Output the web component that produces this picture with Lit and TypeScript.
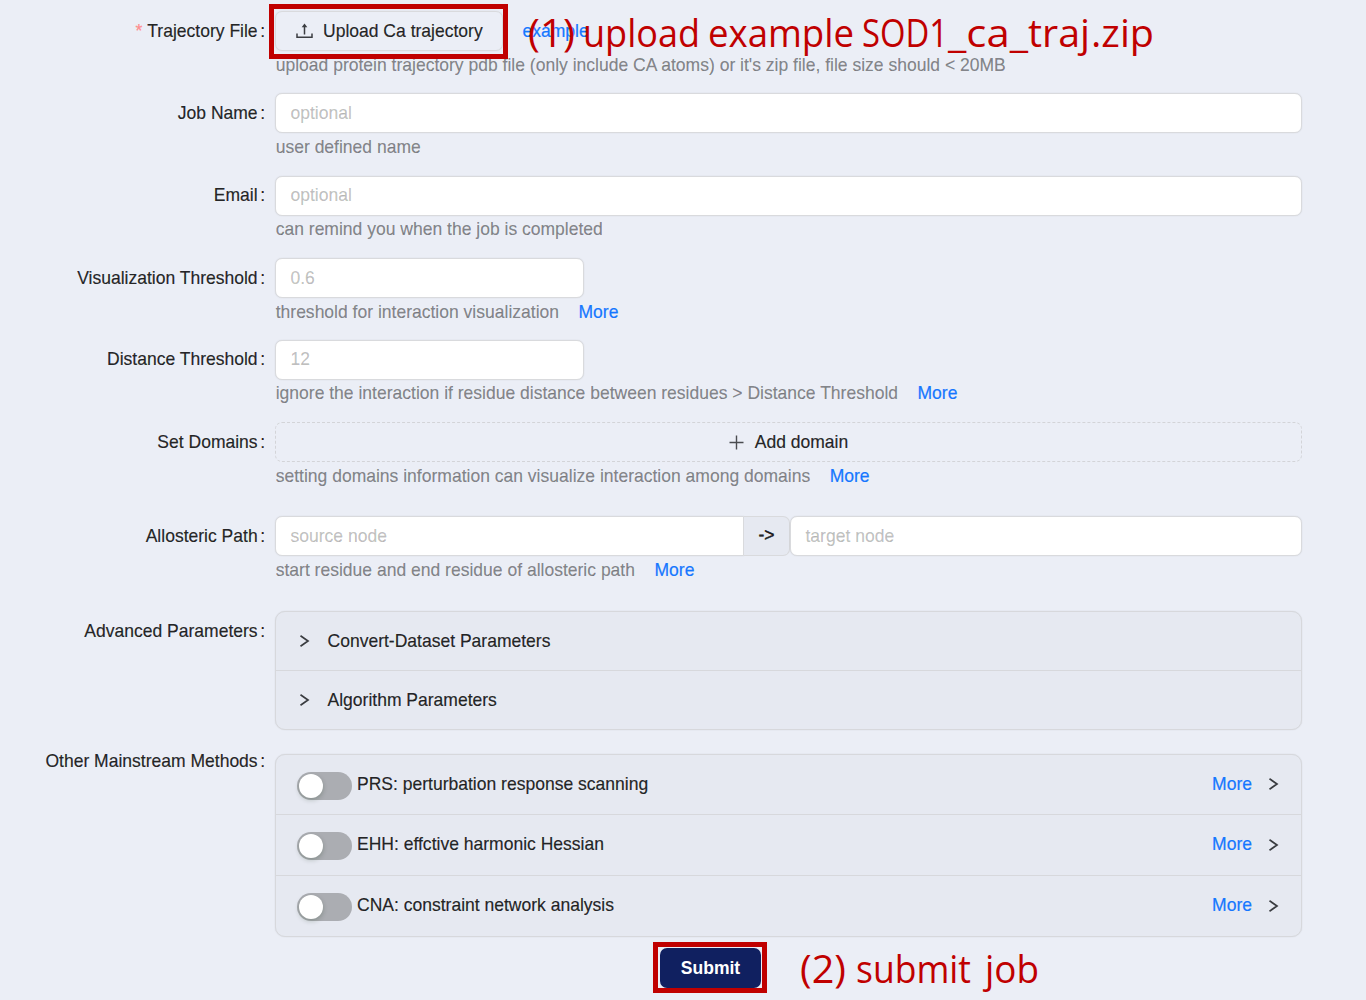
import { LitElement, html, css, svg, nothing } from "lit";
import { customElement } from "lit/decorators.js";

const chevron = html`<svg class="chev" viewBox="0 0 12 14" width="12" height="14"><path d="M1.5 1.8 9 7 1.5 12.2" fill="none" stroke="#3a3c40" stroke-width="1.7"/></svg>`;
type Word = [string, number, number];
const note = (words: Word[]) =>
  svg`<text y="37">${words.map(([t, x, w]) => svg`<tspan x=${x} textLength=${w} lengthAdjust="spacingAndGlyphs">${t}</tspan>`)}</text>`;

@customElement("app-root")
export class AppRoot extends LitElement {
  static styles = css`
    :host { display: block; position: relative; width: 1366px; height: 1000px; overflow: hidden;
      background: #ebeef6; color: rgba(0,0,0,.85); font: 17.52px/27px "Liberation Sans", Arial, sans-serif; box-sizing: border-box;
      -webkit-text-stroke: .2px currentColor; }
    * { box-sizing: border-box; }
    .form { padding-top: 11px; }
    .row { display: grid; grid-template-columns: 265px 1027px; column-gap: 10px; white-space: nowrap; }
    .h81 { height: 81.5px; } .h82 { height: 82px; } .h83 { height: 82.5px; }
    .h94 { height: 94px; } .h95 { height: 95px; } .h142 { height: 142.5px; } .h194 { height: 194.5px; }
    .label { text-align: right; padding-top: 6.6px; }
    .label.up { padding-top: 0; margin-top: -6px; }
    .colon { margin-left: 2.5px; }
    .req { color: #ff8c8e; margin-right: 5px; }
    .input { height: 40px; border: 1px solid #d9dadd; box-shadow: 0 0 1.5px rgba(0,0,0,.1); border-radius: 7px; background: #fff; color: rgba(0,0,0,.25);
      padding: 5.5px 14.5px; flex: 1; }
    .short { width: 309px; }
    .hint { color: rgba(0,0,0,.45); padding: .5px 0 0 .7px; }
    .link { color: #1677ff; }
    .hint .link { margin-left: 19.5px; }
    .line { display: flex; align-items: center; height: 40px; }
    .btn { display: flex; align-items: center; height: 40px; width: 228px; border: 1px solid #d9dadd; box-shadow: 0 0 1.5px rgba(0,0,0,.1); border-radius: 7px; padding-left: 20px; gap: 10px; }
    .example { margin-left: 19.5px; }
    .dashed { display: flex; align-items: center; justify-content: center; gap: 11px; height: 40px; border: 1.5px dashed #d3d4d8; border-radius: 7px; }
    .source { flex: 0 0 469px; border-radius: 7px 0 0 7px; }
    .addon { width: 46px; height: 40px; background: #e6e9f1; border: 1px solid #d9dadd; border-left: 0; border-radius: 0 7px 7px 0; text-align: center; padding-top: 5px; -webkit-text-stroke: .5px currentColor; }
    .panel { border: 1px solid #d7d8dc; box-shadow: 0 0 1.5px rgba(0,0,0,.1); border-radius: 10px; background: #e6e9f1; align-self: start; overflow: hidden; }
    .item { display: flex; align-items: center; height: 58px; padding-left: 22.5px; gap: 17px; }
    .item + .item { border-top: 1px solid #d7d8dc; height: 59px; }
    .method { display: flex; align-items: center; height: 59px; padding: 0 21px 0 20.5px; }
    .method + .method { border-top: 1px solid #d7d8dc; height: 61px; }
    .switch { width: 55px; height: 28px; border-radius: 14px; background: #abadb2; padding: 2px; margin: 3px 5.5px 0 0; }
    .knob { width: 24px; height: 24px; border-radius: 50%; background: #fff; box-shadow: 0 2px 5px rgba(0,35,11,.22); }
    .name { flex: 1; }
    .method .link { margin-right: 16px; }
    .submit { display: flex; align-items: center; justify-content: center; width: 101px; height: 40px; margin-left: 660px; border-radius: 7px; background: #102060; color: #fff; font-weight: bold; -webkit-text-stroke: 0; }
    .frame { position: absolute; border: 5px solid #c00000; }
    .f1 { left: 269px; top: 4px; width: 239px; height: 55px; }
    .f2 { left: 653px; top: 942px; width: 114px; height: 51px; }
    .note { position: absolute; overflow: visible; fill: #c00000; color: #c00000; font: 37.5px "Open Sans", "Noto Sans", sans-serif; -webkit-text-stroke: .4px #c00000; }
    .n1 { left: 527px; top: 10px; }
    .n2 { left: 800px; top: 946px; }
    svg { display: block; }
  `;

  private row(cls: string, label: string, control: unknown, hint = "", more = false, required = false, up = false) {
    return html`<div class="row ${cls}">
      <div class="label ${up ? "up" : ""}">${required ? html`<span class="req">*</span>` : nothing}${label}<span class="colon">:</span></div>
      <div>${control}${hint ? html`<div class="hint">${hint}${more ? html`<span class="link">More</span>` : nothing}</div>` : nothing}</div>
    </div>`;
  }

  render() {
    return html`
      <div class="form">
        ${this.row("h82", "Trajectory File", html`<div class="line"><div class="btn">
          <svg width="17" height="17" viewBox="0 0 17 17"><path d="M1 10.5V14.2H16V10.5M8.5 11.5V3" fill="none" stroke="#3b3d41" stroke-width="1.5"/><path d="M8.5 .5 5.7 4.2H11.3Z" fill="#3b3d41"/></svg>
          <span>Upload Ca trajectory</span></div><span class="link example">example</span></div>`,
          "upload protein trajectory pdb file (only include CA atoms) or it's zip file, file size should < 20MB", false, true)}
        ${this.row("h83", "Job Name", html`<div class="input">optional</div>`, "user defined name")}
        ${this.row("h83", "Email", html`<div class="input">optional</div>`, "can remind you when the job is completed")}
        ${this.row("h81", "Visualization Threshold", html`<div class="input short">0.6</div>`, "threshold for interaction visualization", true)}
        ${this.row("h83", "Distance Threshold", html`<div class="input short">12</div>`, "ignore the interaction if residue distance between residues > Distance Threshold", true)}
        ${this.row("h94", "Set Domains", html`<div class="dashed">
          <svg width="15" height="15" viewBox="0 0 15 15"><path d="M7.5 .5V14.5M.5 7.5H14.5" stroke="#4a4c50" stroke-width="1.4"/></svg><span>Add domain</span></div>`,
          "setting domains information can visualize interaction among domains", true)}
        ${this.row("h95", "Allosteric Path", html`<div class="line"><div class="input source">source node</div><div class="addon">-&gt;</div><div class="input">target node</div></div>`,
          "start residue and end residue of allosteric path", true)}
        ${this.row("h142", "Advanced Parameters", html`<div class="panel">
          ${["Convert-Dataset Parameters", "Algorithm Parameters"].map((t) => html`<div class="item">${chevron}<span>${t}</span></div>`)}</div>`)}
        ${this.row("h194", "Other Mainstream Methods", html`<div class="panel">
          ${["PRS: perturbation response scanning", "EHH: effctive harmonic Hessian", "CNA: constraint network analysis"].map(
            (t) => html`<div class="method"><div class="switch"><div class="knob"></div></div><span class="name">${t}</span><span class="link">More</span>${chevron}</div>`)}</div>`,
          "", false, false, true)}
        <div class="submit">Submit</div>
      </div>
      <div class="frame f1"></div>
      <div class="frame f2"></div>
      <svg class="note n1" width="627" height="50">${note([["(1)", 1, 47], ["upload", 56, 117], ["example", 181, 146], ["SOD1", 335, 86], ["_ca_", 421, 80], ["traj", 501, 62], [".zip", 564, 63]])}</svg>
      <svg class="note n2" width="238" height="50">${note([["(2)", 0, 46], ["submit", 56, 115], ["job", 185, 54]])}</svg>
    `;
  }
}
